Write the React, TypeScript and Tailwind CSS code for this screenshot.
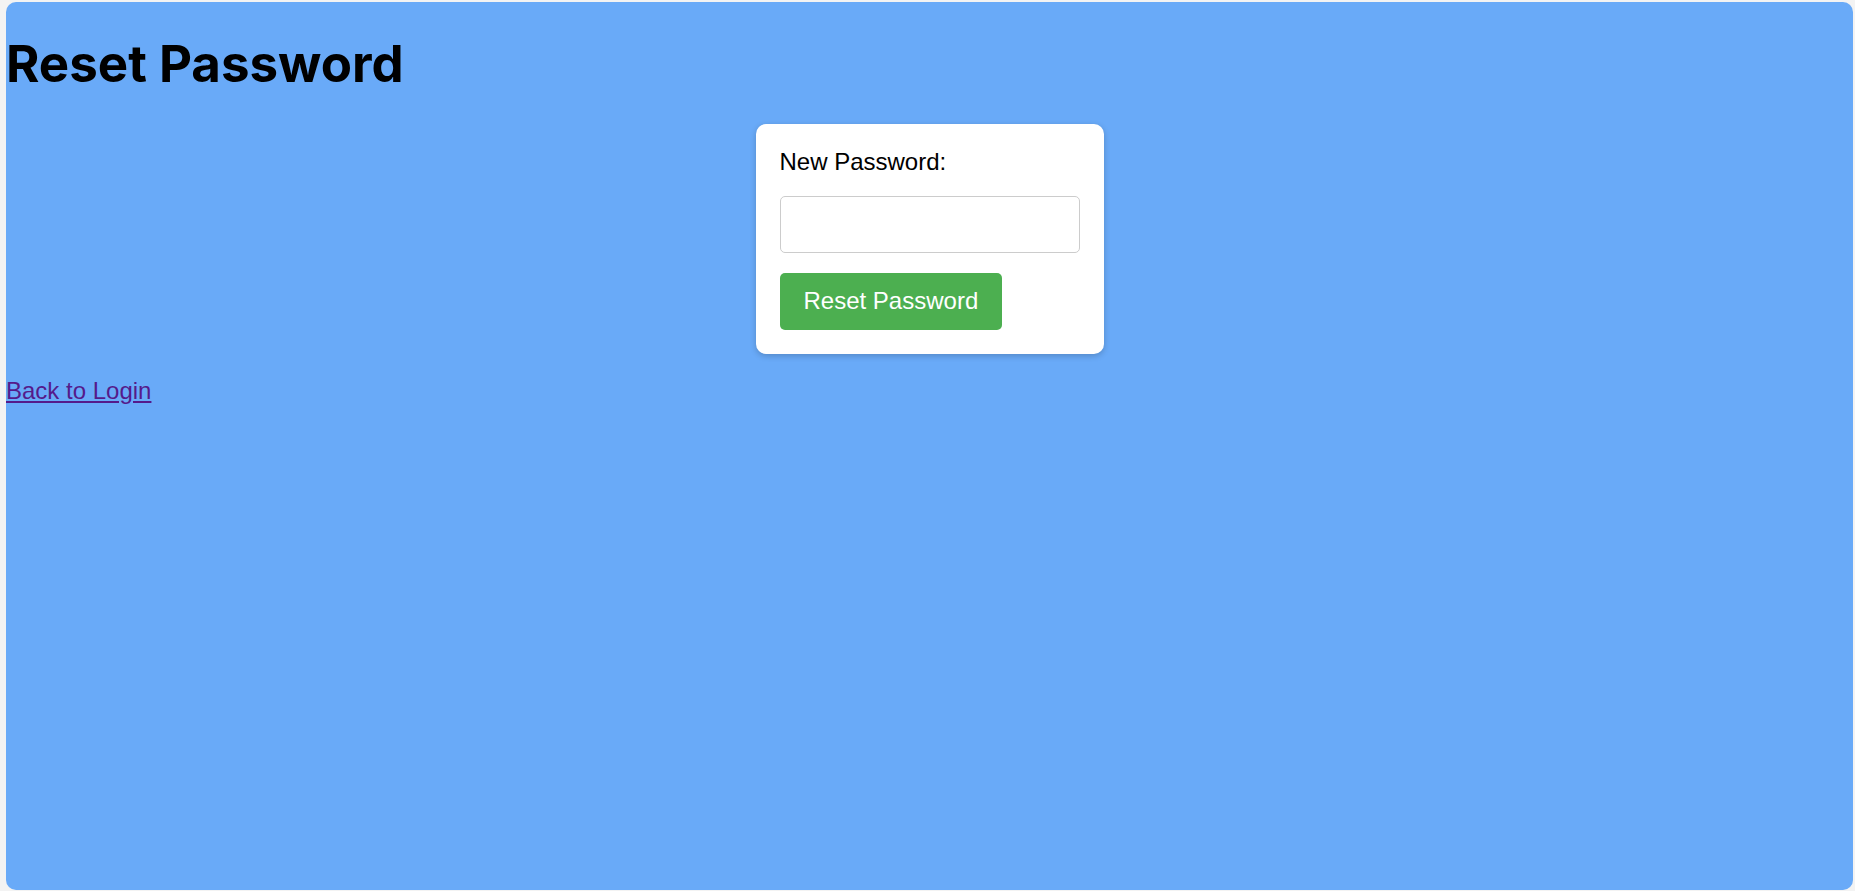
export default function App() {
  return (
    <div className="h-[891px] w-full overflow-hidden bg-[#f3f3f3] pt-[2px] pl-[6px] pr-[2px]">
      <div className="h-[888px] rounded-[10px] bg-[#69aaf8] pt-[31px]">
        <h1 className="m-0 text-[51px] font-bold leading-[61px] text-black [font-family:Inter,'Noto_Sans',sans-serif]">
          Reset Password
        </h1>
        <div className="mx-auto mt-[30px] w-[348px] rounded-[10px] bg-white p-6 shadow-[0_2px_6px_rgba(0,0,0,0.2)] [font-family:'Liberation_Sans',Arial,sans-serif]">
          <label className="block text-[24px] leading-[27.6px] text-black">New Password:</label>
          <input
            type="password"
            className="mt-[20px] block h-[57px] w-[300px] rounded-[5px] border border-[#cccccc] bg-white px-3 text-[24px] outline-none"
          />
          <button className="mt-[20px] block h-[57px] rounded-[5px] bg-[#4caf50] px-6 text-[24px] text-white">
            Reset Password
          </button>
        </div>
        <div className="mt-[23px] text-[24px] leading-[27.6px] [font-family:'Liberation_Sans',Arial,sans-serif]">
          <a href="#" className="text-[#551a8b] underline">
            Back to Login
          </a>
        </div>
      </div>
    </div>
  );
}
